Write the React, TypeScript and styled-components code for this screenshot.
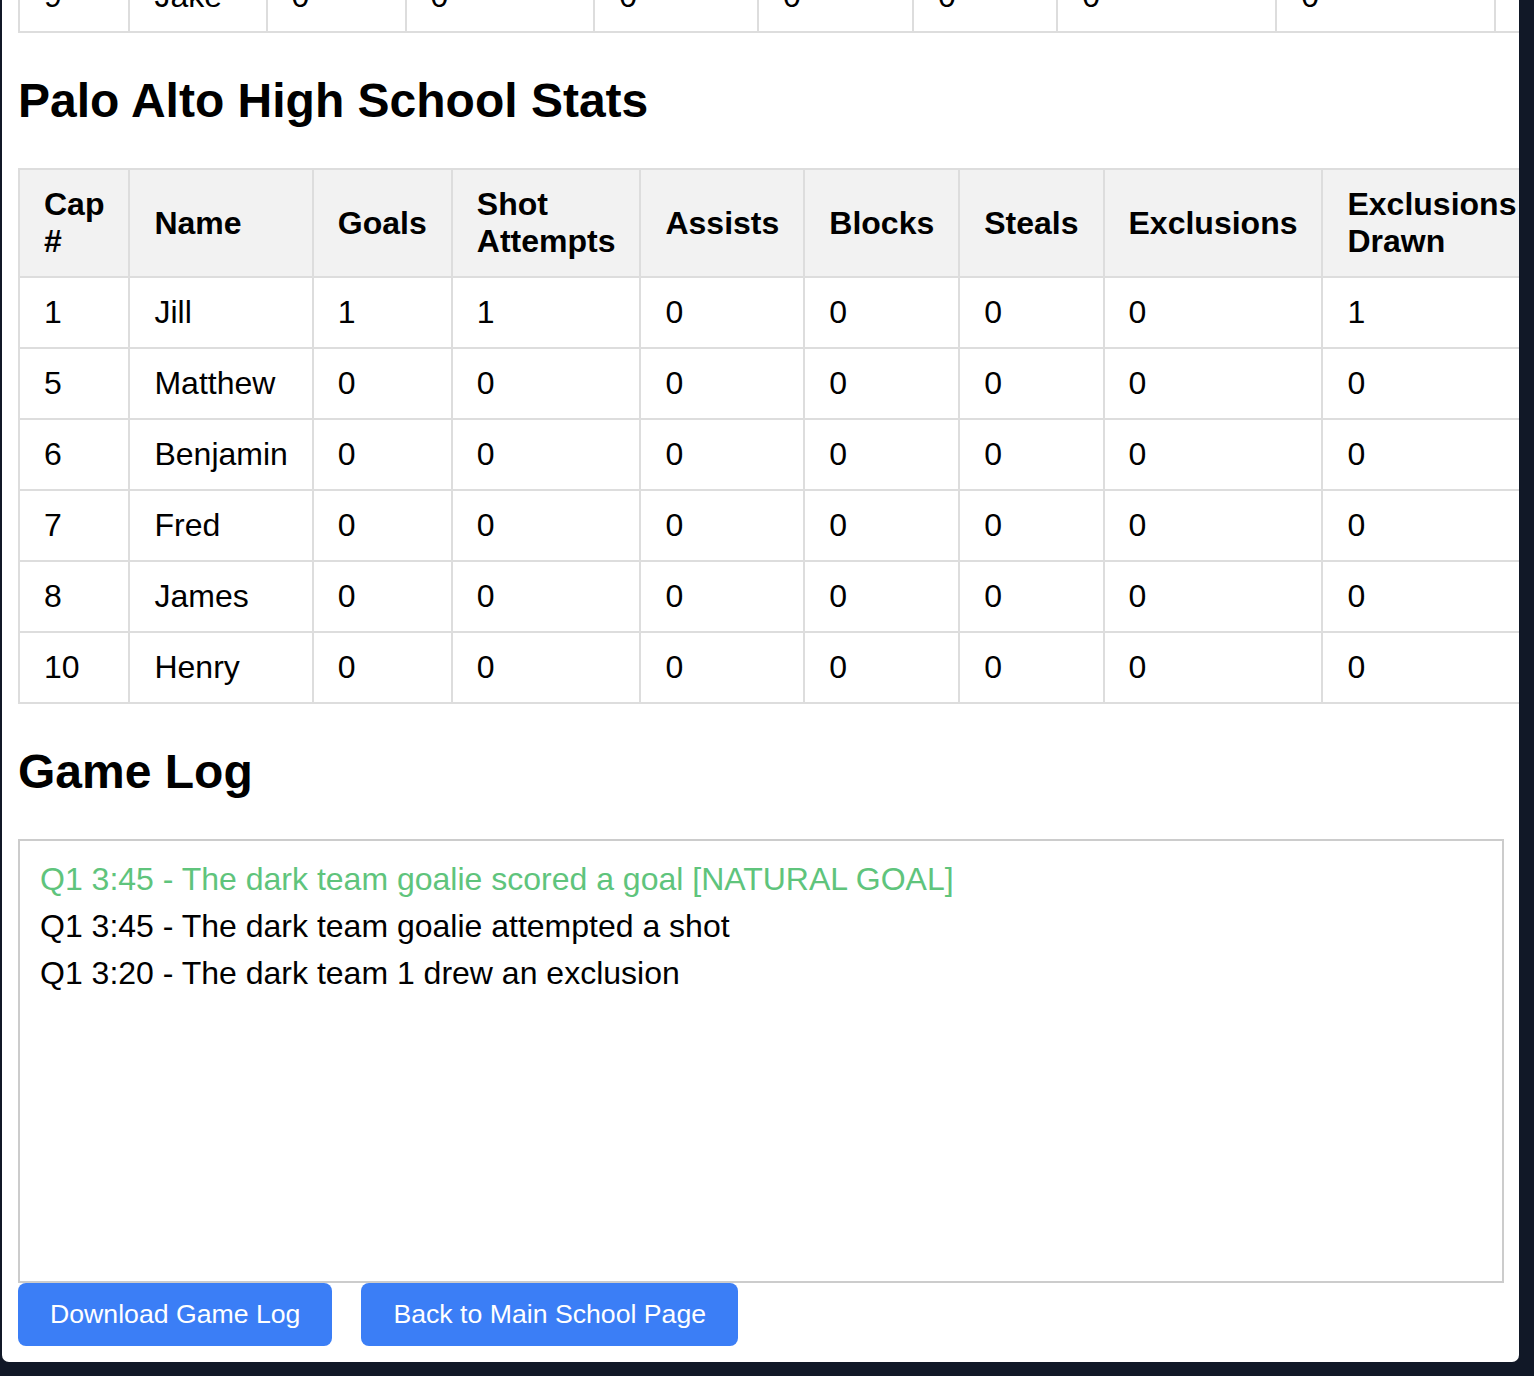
import React from "react";
import styled, { createGlobalStyle } from "styled-components";

const GlobalStyle = createGlobalStyle`
  html, body {
    margin: 0;
    padding: 0;
    background: #111827;
    font-family: "Liberation Sans", Arial, Helvetica, sans-serif;
    color: #000;
  }
  * { box-sizing: border-box; }
`;

const Page = styled.div`
  padding: 0 15px 14px 2px;
`;

const Panel = styled.main`
  background: #ffffff;
  border-radius: 0 0 7px 7px;
  padding: 0 16px 16px;
  overflow: hidden;
`;

const TopClip = styled.div`
  height: 33px;
  margin-right: -16px;
  display: flex;
  flex-direction: column;
  justify-content: flex-end;
  overflow: hidden;
`;

const TableWrap = styled.div<{ $pinned?: boolean }>`
  flex-shrink: 0;
  margin-right: ${(p) => (p.$pinned ? "0" : "-16px")};
  overflow: hidden;
`;

const Table = styled.table`
  width: 100%;
  border-collapse: collapse;
  font-size: 32px;
`;

const Th = styled.th`
  background: #f2f2f2;
  border: 2px solid #dddddd;
  padding: 16px 24px;
  text-align: left;
  font-weight: 700;
  line-height: normal;
`;

const Td = styled.td`
  border: 2px solid #dddddd;
  padding: 16px 24px;
  text-align: left;
  font-weight: 400;
  line-height: normal;
`;

const Heading = styled.h2`
  font-size: 48px;
  font-weight: 700;
  margin: 40px 0 40px;
  line-height: normal;
`;

const LogBox = styled.div`
  width: calc(100% + 1px);
  height: 444px;
  border: 2px solid #cccccc;
  padding: 20px;
  font-size: 32px;
  overflow: hidden;
`;

const LogEntry = styled.div<{ $goal?: boolean }>`
  color: ${(p) => (p.$goal ? "#5fc47c" : "#000000")};
  margin-bottom: 10px;
  line-height: normal;
`;

const ButtonRow = styled.div`
  display: flex;
  gap: 29px;
`;

const Button = styled.button`
  background: #3b7ef6;
  color: #ffffff;
  border: none;
  border-radius: 8px;
  padding: 16px 32px;
  font-family: "Liberation Sans", Arial, sans-serif;
  font-size: 26.67px;
  line-height: normal;
  cursor: pointer;
`;

const headers = [
  "Cap #",
  "Name",
  "Goals",
  "Shot Attempts",
  "Assists",
  "Blocks",
  "Steals",
  "Exclusions",
  "Exclusions Drawn",
  "Penalties",
  "Turnovers",
  "Sprints Won",
];

type Player = { cap: number; name: string; stats: number[] };

const darkTeam: Player[] = [
  { cap: 1, name: "Tom", stats: [1, 1, 0, 0, 0, 0, 1, 0, 0, 0] },
  { cap: 9, name: "Jake", stats: [0, 0, 0, 0, 0, 0, 0, 0, 0, 0] },
];

const paly: Player[] = [
  { cap: 1, name: "Jill", stats: [1, 1, 0, 0, 0, 0, 1, 0, 0, 0] },
  { cap: 5, name: "Matthew", stats: [0, 0, 0, 0, 0, 0, 0, 0, 0, 0] },
  { cap: 6, name: "Benjamin", stats: [0, 0, 0, 0, 0, 0, 0, 0, 0, 0] },
  { cap: 7, name: "Fred", stats: [0, 0, 0, 0, 0, 0, 0, 0, 0, 0] },
  { cap: 8, name: "James", stats: [0, 0, 0, 0, 0, 0, 0, 0, 0, 0] },
  { cap: 10, name: "Henry", stats: [0, 0, 0, 0, 0, 0, 0, 0, 0, 0] },
];

const StatsTable: React.FC<{ players: Player[] }> = ({ players }) => (
  <Table>
    <thead>
      <tr>
        {headers.map((h) => (
          <Th key={h}>{h}</Th>
        ))}
      </tr>
    </thead>
    <tbody>
      {players.map((p) => (
        <tr key={p.cap}>
          <Td>{p.cap}</Td>
          <Td>{p.name}</Td>
          {p.stats.map((s, i) => (
            <Td key={i}>{s}</Td>
          ))}
        </tr>
      ))}
    </tbody>
  </Table>
);

const log = [
  { text: "Q1 3:45 - The dark team goalie scored a goal [NATURAL GOAL]", goal: true },
  { text: "Q1 3:45 - The dark team goalie attempted a shot", goal: false },
  { text: "Q1 3:20 - The dark team 1 drew an exclusion", goal: false },
];

export default function App() {
  return (
    <>
      <GlobalStyle />
      <Page>
        <Panel>
          <TopClip>
            <TableWrap $pinned>
              <StatsTable players={darkTeam} />
            </TableWrap>
          </TopClip>
          <Heading>Palo Alto High School Stats</Heading>
          <TableWrap>
            <StatsTable players={paly} />
          </TableWrap>
          <Heading>Game Log</Heading>
          <LogBox>
            {log.map((l, i) => (
              <LogEntry key={i} $goal={l.goal}>
                {l.text}
              </LogEntry>
            ))}
          </LogBox>
          <ButtonRow>
            <Button>Download Game Log</Button>
            <Button>Back to Main School Page</Button>
          </ButtonRow>
        </Panel>
      </Page>
    </>
  );
}
